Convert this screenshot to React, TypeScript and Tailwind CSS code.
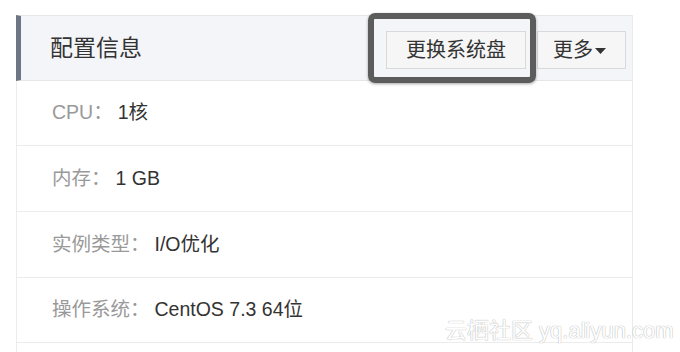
const FONT = "font-['Liberation_Sans','Noto_Sans_CJK_SC',sans-serif]";

const ROWS = [
  { label: 'CPU：', value: '1核', h: 'h-[65px]' },
  { label: '内存：', value: '1 GB', h: 'h-[66px]' },
  { label: '实例类型：', value: 'I/O优化', h: 'h-[66px]' },
  { label: '操作系统：', value: 'CentOS 7.3 64位', h: 'h-[65px]' },
];

function Caret() {
  return (
    <svg width="11" height="6" viewBox="0 0 11 6" className="ml-[2px] mt-[2px]">
      <path d="M0 0h11L5.5 6z" fill="#333" />
    </svg>
  );
}

export default function App() {
  return (
    <div className={`relative h-[352px] w-[680px] overflow-hidden bg-white pl-[16px] pt-[15px] ${FONT}`}>
      <div className="flex w-[617px] flex-col border-r border-[#ebebeb]">
        <div className="flex h-[66px] items-center justify-between border-b border-l-[5px] border-t border-[#e6e6e6] border-l-[#6e7584] bg-[#f4f5f9] pl-[29px] pr-[6px]">
          <span className="text-[23px] leading-none text-[#333]">配置信息</span>
          <div className="mt-[3px] flex items-center gap-[11px]">
            <div className="relative">
              <button className="flex h-[38px] w-[140px] items-center justify-center border border-[#d9d9d9] bg-[#f6f6f6] text-[20px] leading-none text-[#333]">
                更换系统盘
              </button>
              <div className="pointer-events-none absolute -bottom-[14px] -left-[18px] -right-[10px] -top-[18px] z-10 rounded-[7px] border-[6px] border-[#5c5c5c] shadow-[0_1px_3px_rgba(0,0,0,0.35)]" />
            </div>
            <button className="flex h-[38px] w-[89px] items-center border border-[#d9d9d9] bg-[#f6f6f6] pl-[15px] text-[20px] leading-none text-[#333]">
              更多
              <Caret />
            </button>
          </div>
        </div>
        {ROWS.map((r) => (
          <div
            key={r.label}
            className={`flex ${r.h} items-center border-b border-l border-[#ececec] pl-[35px] text-[19.5px] leading-none`}
          >
            <span className="text-[#999]">{r.label}</span>
            <span className="ml-[5px] text-[#333]">{r.value}</span>
          </div>
        ))}
        <div className="h-[20px] border-l border-[#ececec]" />
      </div>
      <div className="pointer-events-none absolute left-[445px] top-[320px] text-[22px] leading-none text-white [text-shadow:0_0_1px_#b5b5b5,0_0_1px_#b5b5b5]">
        云栖社区 yq.aliyun.com
      </div>
    </div>
  );
}
